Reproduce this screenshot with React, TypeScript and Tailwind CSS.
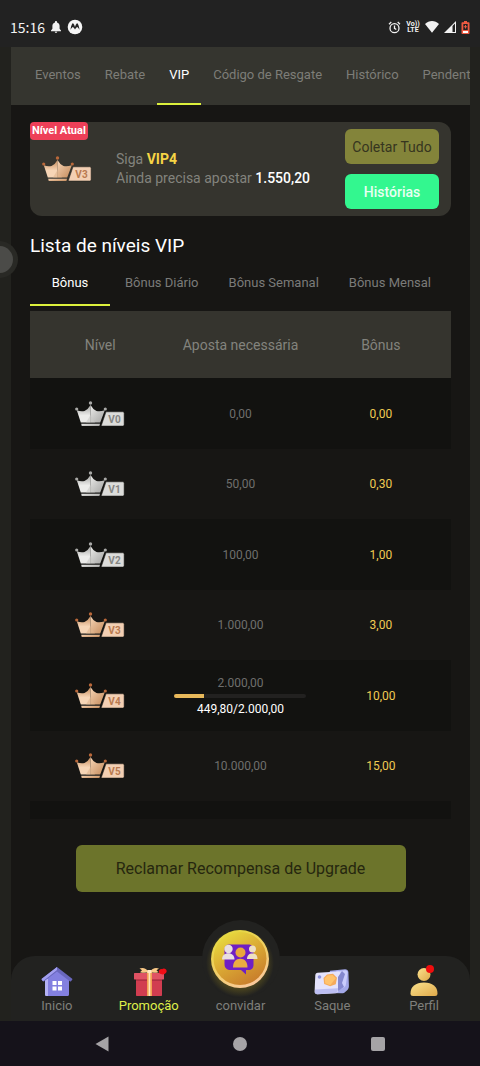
import { useId, useState } from "react";
import type { ReactNode } from "react";
import clsx from "clsx";

const MAIN_TABS = ["Eventos", "Rebate", "VIP", "Código de Resgate", "Histórico", "Pendente"];
const BONUS_TABS = ["Bônus", "Bônus Diário", "Bônus Semanal", "Bônus Mensal"];

type Level = {
  level: number;
  bet: string;
  bonus: string;
  progress?: { label: string; percent: number };
};

const LEVELS: Level[] = [
  { level: 0, bet: "0,00", bonus: "0,00" },
  { level: 1, bet: "50,00", bonus: "0,30" },
  { level: 2, bet: "100,00", bonus: "1,00" },
  { level: 3, bet: "1.000,00", bonus: "3,00" },
  { level: 4, bet: "2.000,00", bonus: "10,00", progress: { label: "449,80/2.000,00", percent: 22.5 } },
  { level: 5, bet: "10.000,00", bonus: "15,00" },
];

function StatusBar() {
  return (
    <header className="flex h-[47px] items-center justify-between bg-[#222222] px-[10px] pt-[7px] text-[#f2f2f2]">
      <div className="flex items-center gap-[6px]">
        <span className="font-['Noto_Sans_CJK_SC',sans-serif] text-sm">15:16</span>
        <svg width="10" height="12" viewBox="0 0 10 12" fill="currentColor">
          <path d="M5 0c.6 0 1 .4 1 1v.4c1.600.4 2.600 1.700 2.600 3.400v3L10 9.500v.7H0v-.7l1.400-1.700v-3c0-1.700 1-3 2.600-3.400V1c0-.6.4-1 1-1zM3.800 10.700h2.400c0 .7-.5 1.200-1.200 1.200s-1.200-.5-1.200-1.200z" />
        </svg>
        <svg width="16" height="16" viewBox="0 0 16 16">
          <circle cx="8" cy="8" r="7.300" fill="#f5f5f5" />
          <path
            d="M3.500 11c.2-2.900 1-5.400 2.400-7 1.100 1.100 1.700 2.500 2.100 4 .4-1.500 1-2.900 2.100-4 1.400 1.600 2.200 4.100 2.400 7-.6-1.500-1.300-2.500-2.400-3-.7.500-1.600 1.300-2.100 2.500-.5-1.200-1.400-2-2.100-2.500-1.100.5-1.800 1.500-2.400 3z"
            fill="#222"
          />
        </svg>
      </div>
      <div className="flex items-center gap-[5px]">
        <svg width="13" height="13" viewBox="0 0 13 13" fill="none" stroke="currentColor" strokeWidth="1.300">
          <circle cx="6.500" cy="7.200" r="4.500" />
          <path d="M6.500 4.600v2.800l1.800 1.100M1 3.200 3.300 1.100M12 3.200 9.700 1.100" />
        </svg>
        <span className="w-[14px] text-center text-[7px] leading-[6px] font-bold">
          Vo))
          <br />
          LTE
        </span>
        <svg width="14" height="12" viewBox="0 0 14 12" fill="currentColor">
          <path d="M0 3C4 -1 10 -1 14 3L7 11.800z" />
        </svg>
        <svg width="12" height="12" viewBox="0 0 12 12">
          <path d="M0 12 12 0v12z" fill="#f2f2f2" />
          <path d="M8.500 5 11 2.400V11H8.500z" fill="#222" />
        </svg>
        <svg width="9" height="13" viewBox="0 0 9 13">
          <path d="M3 0h3v1.300h1.500c.6 0 1 .4 1 1V12c0 .6-.4 1-1 1h-6c-.6 0-1-.4-1-1V2.300c0-.6.4-1 1-1H3z" fill="#ee5a42" />
          <path d="M2.300 3h4.400v6H2.300z" fill="#222" />
          <path d="M4 4h1v1.300h1.200v1H5v1.300H4V6.300H2.800v-1H4z" fill="#ee5a42" />
          <path d="M2 10h5v2H2z" fill="#fff" />
        </svg>
      </div>
    </header>
  );
}

function Crown({ level }: { level: number }) {
  const id = useId();
  const bronze = level >= 3;
  const light = bronze ? "#f6d5b6" : "#ececea";
  const mid = bronze ? "#e0b48c" : "#c9c9c7";
  const dark = bronze ? "#c48a5a" : "#a3a3a1";
  const tip = bronze ? "#b9683a" : "#a9a9a7";

  return (
    <svg width="50" height="26" viewBox="0 0 50 26" role="img" aria-label={`V${level}`}>
      <defs>
        <linearGradient id={id} x1="0" y1="0" x2="0" y2="1">
          <stop offset="0" stopColor={dark} />
          <stop offset=".6" stopColor={light} />
          <stop offset="1" stopColor={light} />
        </linearGradient>
        <linearGradient id={`${id}b`} x1="0" y1="0" x2="1" y2="1">
          <stop offset="0" stopColor={light} />
          <stop offset="1" stopColor={dark} />
        </linearGradient>
      </defs>
      <path d="M1.800 9.200Q6 11 9.500 10 13 8.500 15.500 4V21.500H5.800z" fill={`url(#${id})`} />
      <path d="M15.500 4Q18 8.500 21.500 10 25 11 29.800 9.200L25.200 21.500H15.500z" fill={`url(#${id}b)`} />
      <path d="M15.500 14 20 21.500H11z" fill={mid} opacity=".6" />
      <path d="M6.200 22.800H25l-.6 2.200H6.700z" fill={`url(#${id}b)`} />
      <circle cx="1.700" cy="8" r="1.600" fill={tip} />
      <circle cx="15.500" cy="2" r="1.700" fill={tip} />
      <circle cx="30.300" cy="8" r="1.600" fill={tip} />
      <path
        d="M31 10.800h16.600c.9 0 1.500.6 1.500 1.500v11.200c0 .9-.6 1.500-1.500 1.500H26.200z"
        fill={bronze ? "#f3cfb3" : "#dcdcda"}
        stroke="#1a1815"
        strokeWidth=".5"
      />
      <text
        x="39.500"
        y="21.500"
        textAnchor="middle"
        fontSize="10"
        fontWeight="700"
        fontFamily="Roboto, sans-serif"
        fill={bronze ? "#b97a50" : "#858583"}
      >
        V{level}
      </text>
    </svg>
  );
}

function LevelRow({ item }: { item: Level }) {
  return (
    <tr className="odd:h-[71px] odd:bg-[#121210] even:h-[70px]">
      <td>
        <div className="flex justify-center">
          <Crown level={item.level} />
        </div>
      </td>
      <td className="text-center text-xs leading-[14px] text-[#6f6f6d]">
        {item.bet}
        {item.progress && (
          <>
            <div className="mx-auto my-1 h-1 w-[132px] overflow-hidden rounded-full bg-[#222120]">
              <div className="h-full bg-[#e8b85a]" style={{ width: `${item.progress.percent}%` }} />
            </div>
            <div className="text-white">{item.progress.label}</div>
          </>
        )}
      </td>
      <td className="text-center text-xs text-[#f0cb52]">{item.bonus}</td>
    </tr>
  );
}

function HomeIcon() {
  return (
    <svg width="32" height="30" viewBox="0 0 32 30">
      <path d="M4 12 16 2.500 28 12v15.500c0 .9-.6 1.500-1.500 1.500h-21c-.9 0-1.500-.6-1.500-1.500z" fill="#8380e0" />
      <path d="M4 12h3v17H5.500c-.9 0-1.500-.6-1.500-1.500z" fill="#b4b2f5" />
      <path d="M16 0 31.200 11.800c.3.300.3.900-.1 1.300l-1.200 1.200c-.3.300-.8.300-1.100 0L16 4.500 3.200 14.300c-.3.300-.8.300-1.100 0L.9 13.100c-.4-.4-.4-1-.1-1.300z" fill="#6967bd" />
      <path d="M16 0v3L2 14.200.9 13.100c-.4-.4-.4-1-.1-1.300z" fill="#a3a0f0" />
      <path d="M11.500 14h4v4h-4zM17 14h4v4h-4zM11.500 19.500h4v4h-4zM17 19.500h4v4h-4z" fill="#fff" />
    </svg>
  );
}

function GiftIcon() {
  return (
    <svg width="36" height="30" viewBox="0 0 36 30">
      <path d="M5 11h26v17c0 .6-.4 1-1 1H6c-.6 0-1-.4-1-1z" fill="#d13d50" />
      <path d="M3.500 6h29c.3 0 .5.200.5.500V12c0 .3-.2.500-.5.500h-29c-.3 0-.5-.2-.5-.5V6.500c0-.3.200-.5.500-.5z" fill="#df5263" />
      <path d="M5 12.500h26v1.300H5z" fill="#a92d40" />
      <path d="M16 5h5v24h-5z" fill="#f4a052" />
      <path d="M17.600 5h1.700v24h-1.700z" fill="#ffe5bb" />
      <path d="M18 5C15 .500 11 .300 8.500 1.600L11 3.300 9 5.300c3.400.8 6.500.6 9-.3zM18.500 5C21.500.500 25.500.300 28 1.600l-2.500 1.700 2 2c-3.400.8-6.500.6-9-.3z" fill="#f9c987" />
      <path d="M16.400 3h4v3h-4z" fill="#ffe8c4" />
      <path d="M31 2.200c2-1.700 6 .2 4.200 3.300C34 7.500 31.500 8 30 7c-2-.5-3-2.300-1.600-3.900.7-.8 1.900-1.200 2.600-.9z" fill="#f20d16" />
    </svg>
  );
}

function CashIcon() {
  return (
    <svg width="36" height="28" viewBox="0 0 36 28">
      <path d="M16 1.800 31 .300c1.600-.1 3.300 1 3.400 2.800l.5 13.600c.1 1.800-.5 3.300-2 4.700l-2 1.800c-.8.700-1.500 1-2.600 1L10 24z" fill="#a3a8e8" />
      <path d="M22 2.500 31 1.300c1.500-.1 2.600.9 2.600 2.300L32 15c-.2 1.700-1 3-2.200 3.800L24 21z" fill="#c9ccfb" />
      <path d="M3.600 3.800 24 2.500c1.700-.1 2.600 1 2.500 2.500l-2 16.500c-.2 1.500-1.300 2.600-2.800 2.700L3.500 25.300C1.500 25.400.3 24 .6 22.300L1.300 6.200c.1-1.300 1-2.300 2.300-2.400z" fill="#e4e3fc" />
      <path d="m1 20.500 23-1.300-.3 2.500c-.2 1.400-1 2.300-2.400 2.400L3.500 25.200c-1.800.1-2.800-1.200-2.600-2.800z" fill="#bdbff3" />
      <path d="m24 8 4-6 3 3-3 9 2 4-6 4z" fill="#8488cf" />
      <path d="m13 5.500 6-.7 4 4-1.200 6.500-5.600 2-6-2.300L9.500 9z" fill="#f5aa5b" />
      <path d="m13.500 6.500 5-.6 3.300 3.300-5.600 7-5-2-.5-4.700z" fill="#ffc36c" />
      <circle cx="5.500" cy="8" r="1.800" fill="#8e92dc" />
    </svg>
  );
}

function ProfileIcon() {
  return (
    <svg width="28" height="32" viewBox="0 0 28 32">
      <defs>
        <linearGradient id="profile" x1="0" x2="1" y2="1">
          <stop offset="0" stopColor="#fbe28d" />
          <stop offset="1" stopColor="#dfa94a" />
        </linearGradient>
      </defs>
      <circle cx="14" cy="9.500" r="6.500" fill="url(#profile)" />
      <path d="M.5 28.500C.5 21.500 5.500 17.500 14 17.500s13.500 4 13.500 11c0 1.700-.9 2.500-2.500 2.500H3c-1.600 0-2.500-.8-2.500-2.500z" fill="url(#profile)" />
      <circle cx="20" cy="4" r="4" fill="#f00d0d" />
    </svg>
  );
}

function InviteIcon() {
  return (
    <svg className="shrink-0" width="76" height="76" viewBox="0 0 76 76">
      <defs>
        <linearGradient id="coin" x1=".15" y1="0" x2=".75" y2="1">
          <stop offset="0" stopColor="#e9e03f" />
          <stop offset=".45" stopColor="#dcae35" />
          <stop offset="1" stopColor="#c77a2b" />
        </linearGradient>
        <linearGradient id="rim" x1=".2" y1="0" x2=".7" y2="1">
          <stop offset="0" stopColor="#e3d93c" />
          <stop offset=".5" stopColor="#f0cf62" />
          <stop offset="1" stopColor="#fbc9a0" />
        </linearGradient>
        <radialGradient id="glow">
          <stop offset=".7" stopColor="#8a7a1d" stopOpacity=".45" />
          <stop offset="1" stopColor="#8a7a1d" stopOpacity="0" />
        </radialGradient>
      </defs>
      <circle cx="38" cy="42" r="34" fill="url(#glow)" />
      <circle cx="38" cy="38" r="29" fill="url(#rim)" />
      <circle cx="38" cy="37.500" r="26.500" fill="url(#coin)" />
      <path d="M28 23.500h18c3.300 0 5.500 2 5.500 5.300V44c0 3-2 5-5 5h-2.500v4.500L39 49H29c-4 0-6.500-2-6.500-6V29c0-3.500 2-5.500 5.500-5.500z" fill="#6f1fc4" />
      <circle cx="26.500" cy="28" r="4.200" fill="#e9dfe2" />
      <path d="M20 38.500c0-4 2.500-6.300 6.300-6.300s6.200 2.300 6.200 6.300z" fill="#e9dfe2" />
      <circle cx="50.500" cy="28" r="3.500" fill="#eee0c4" />
      <path d="M45 38c0-3.600 2-5.600 5.300-5.600s5.200 2 5.200 5.600z" fill="#eee0c4" />
      <circle cx="38.500" cy="31.500" r="5" fill="#e9a63d" />
      <path d="M31 46.500c0-6 2.800-8.800 7.300-8.800s7.200 2.800 7.200 8.800z" fill="#eaab43" />
    </svg>
  );
}

function NavItem({ label, active, children }: { label: string; active?: boolean; children: ReactNode }) {
  return (
    <a
      href="#"
      className={clsx(
        "relative flex h-[65px] flex-1 flex-col items-center justify-end pb-[6px] text-[13px] leading-[18px]",
        active ? "text-[#dff04a]" : "text-[#7f7f7b]",
      )}
    >
      {children}
      {label}
    </a>
  );
}

function BottomNav() {
  return (
    <nav className="relative flex rounded-t-3xl bg-[#222220]">
      <div className="absolute bottom-[23px] left-1/2 size-[78px] -translate-x-1/2 rounded-full bg-[#222220]" />
      <NavItem label="Inicio">
        <HomeIcon />
      </NavItem>
      <NavItem label="Promoção" active>
        <GiftIcon />
      </NavItem>
      <NavItem label="convidar">
        <InviteIcon />
      </NavItem>
      <NavItem label="Saque">
        <CashIcon />
      </NavItem>
      <NavItem label="Perfil">
        <ProfileIcon />
      </NavItem>
    </nav>
  );
}

function SystemNav() {
  return (
    <footer className="flex h-[45px] items-center justify-center bg-[#15121a] text-[#a5a3a6]">
      <div className="flex w-[290px] items-center justify-between">
        <button type="button" aria-label="Voltar">
          <svg width="14" height="16" viewBox="0 0 14 16" fill="currentColor">
            <path d="M13.500.500v15L.500 8z" />
          </svg>
        </button>
        <button type="button" aria-label="Tela inicial" className="size-[14px] rounded-full bg-current" />
        <button type="button" aria-label="Recentes" className="size-[14px] rounded-xs bg-current" />
      </div>
    </footer>
  );
}

export default function App() {
  const [mainTab, setMainTab] = useState("VIP");
  const [bonusTab, setBonusTab] = useState("Bônus");

  return (
    <div className="relative flex min-h-screen flex-col bg-[#22221e] font-[Roboto,sans-serif]">
      <StatusBar />

      <div className="mr-[10px] ml-[11px] flex flex-1 flex-col bg-[#171614]">
        <div className="flex h-[58px] overflow-hidden bg-[#35352f] px-3">
          {MAIN_TABS.map((tab) => (
            <button
              key={tab}
              type="button"
              onClick={() => setMainTab(tab)}
              className={clsx(
                "shrink-0 border-b-2 px-3 text-[13px]",
                tab === mainTab ? "border-[#dcf03c] text-white" : "border-transparent text-[#7d7d78]",
              )}
            >
              {tab}
            </button>
          ))}
        </div>

        <main className="flex-1 px-[19px] pt-[17px]">
          <section className="relative flex h-[94px] items-center rounded-xl bg-[#35342e] pr-3 pl-3">
            <span className="absolute top-0 left-0 rounded bg-[#ee3f58] px-[2px] text-[11px] leading-[18px] font-bold text-white">
              Nível Atual
            </span>
            <Crown level={3} />
            <div className="ml-6 flex-1 text-sm leading-[19px] text-[#83837d]">
              <p>
                Siga <strong className="text-[#f6d445]">VIP4</strong>
              </p>
              <p>
                Ainda precisa apostar <span className="font-medium text-white">1.550,20</span>
              </p>
            </div>
            <div className="flex w-[94px] flex-col gap-[10px]">
              <button type="button" className="h-[35px] rounded-md bg-[#83843a] text-sm text-[#36351f]">
                Coletar Tudo
              </button>
              <button type="button" className="h-[35px] rounded-md bg-[#33f78f] text-sm font-medium text-[#e9fff2]">
                Histórias
              </button>
            </div>
          </section>

          <h2 className="mt-[18px] text-[19px] leading-6 text-white">Lista de níveis VIP</h2>

          <div className="mt-1 flex h-[44px] overflow-hidden">
            {BONUS_TABS.map((tab) => (
              <button
                key={tab}
                type="button"
                onClick={() => setBonusTab(tab)}
                className={clsx(
                  "min-w-[80px] shrink-0 border-b-2 px-[15px] text-[13px]",
                  tab === bonusTab ? "border-[#dcf03c] text-white" : "border-transparent text-[#7b7b79]",
                )}
              >
                {tab}
              </button>
            ))}
          </div>

          <div className="mt-[5px] h-[508px] overflow-hidden">
            <table className="w-full table-fixed">
              <thead>
                <tr className="h-[67px] bg-[#35342e] text-sm text-[#83837d]">
                  <th className="font-normal">Nível</th>
                  <th className="font-normal">Aposta necessária</th>
                  <th className="font-normal">Bônus</th>
                </tr>
              </thead>
              <tbody>
                {LEVELS.map((item) => (
                  <LevelRow key={item.level} item={item} />
                ))}
                <tr className="h-[71px] bg-[#121210]">
                  <td colSpan={3} />
                </tr>
              </tbody>
            </table>
          </div>

          <button
            type="button"
            className="mx-auto mt-[26px] block h-[47px] w-[330px] rounded-md bg-[#6c742b] text-base text-[#26270f]"
          >
            Reclamar Recompensa de Upgrade
          </button>
        </main>

        <BottomNav />
      </div>

      <SystemNav />

      <div className="absolute top-[241px] -left-[19px] flex size-[37px] items-center justify-center rounded-full bg-[#292925]">
        <div className="size-[27px] rounded-full bg-[#4b4b48]" />
      </div>
    </div>
  );
}
